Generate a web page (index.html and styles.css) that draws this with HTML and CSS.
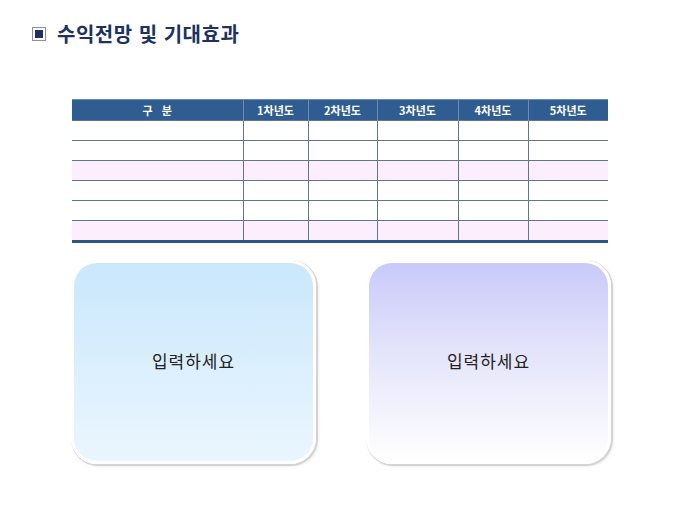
FILE: index.html
```html
<!DOCTYPE html>
<html lang="ko">
<head>
<meta charset="utf-8">
<link rel="stylesheet" href="styles.css">
</head>
<body>
<div class="page">
  <h1 class="title"><span class="title-icon"><span class="title-icon-inner"></span></span>수익전망 및 기대효과</h1>
  <table class="grid">
    <colgroup>
      <col class="c0"><col class="c1"><col class="c2"><col class="c3"><col class="c4"><col class="c5">
    </colgroup>
    <thead>
      <tr><th>구&nbsp;&nbsp;&nbsp;분</th><th>1차년도</th><th>2차년도</th><th>3차년도</th><th>4차년도</th><th>5차년도</th></tr>
    </thead>
    <tbody>
      <tr><td></td><td></td><td></td><td></td><td></td><td></td></tr>
      <tr><td></td><td></td><td></td><td></td><td></td><td></td></tr>
      <tr class="pink"><td></td><td></td><td></td><td></td><td></td><td></td></tr>
      <tr><td></td><td></td><td></td><td></td><td></td><td></td></tr>
      <tr><td></td><td></td><td></td><td></td><td></td><td></td></tr>
      <tr class="pink last"><td></td><td></td><td></td><td></td><td></td><td></td></tr>
    </tbody>
  </table>
  <div class="cards">
    <div class="card card-blue">입력하세요</div>
    <div class="card card-violet">입력하세요</div>
  </div>
</div>
</body>
</html>
```
FILE: styles.css
```css
html, body {
  margin: 0;
  padding: 0;
  background: #ffffff;
}
body {
  width: 680px;
  height: 510px;
  overflow: hidden;
  font-family: "Noto Sans CJK KR", "Noto Sans", sans-serif;
}
.page {
  display: flex;
  flex-direction: column;
  padding: 21px 0 0 32px;
}
.title {
  display: flex;
  align-items: center;
  margin: 0;
  font-size: 20px;
  font-weight: 700;
  color: #1c3260;
  line-height: 26px;
  letter-spacing: 0.5px;
}
.title-icon {
  display: flex;
  align-items: center;
  justify-content: center;
  width: 12px;
  height: 12px;
  border: 1px solid #8a8f99;
  margin-right: 11px;
}
.title-icon-inner {
  width: 8px;
  height: 8px;
  background: #1c3262;
}
.grid {
  margin: 52px 0 0 40px;
  width: 536px;
  border-collapse: collapse;
  table-layout: fixed;
}
.c0 { width: 171px; }
.c1 { width: 65px; }
.c2 { width: 69px; }
.c3 { width: 81px; }
.c4 { width: 70px; }
.c5 { width: 80px; }
.grid th {
  height: 20px;
  padding: 0;
  background: #2f5d92;
  color: #ffffff;
  font-size: 11px;
  font-weight: 700;
  border-left: 1px solid #6c8bb3;
  border-top: 1px solid #6c8bb3;
}
.grid th:first-child { border-left: none; }
.grid td {
  height: 19px;
  padding: 0;
  border-top: 1px solid #5f7593;
  border-left: 1px solid #5f7593;
}
.grid td:first-child { border-left: none; }
.grid tr.pink td { background: #fdeefd; }
.grid tr.last td { border-bottom: 3px solid #2d5687; }
.cards {
  display: flex;
  gap: 50px;
  margin: 17px 0 0 39px;
}
.card {
  width: 239px;
  height: 194px;
  padding-bottom: 4px;
  border-radius: 26px;
  border: 3px solid #ffffff;
  box-shadow: 1px 1px 0 1px #d4d4d4, 2px 2px 3px rgba(0,0,0,0.12);
  display: flex;
  align-items: center;
  justify-content: center;
  font-size: 17px;
  line-height: 1;
  letter-spacing: 1px;
  color: #222222;
}
.card-blue {
  background: linear-gradient(to bottom, #cae7fc 0%, #eaf6fe 100%);
}
.card-violet {
  background: linear-gradient(to bottom, #c9c9fa 0%, #e4e4fb 45%, #ffffff 100%);
}
```
